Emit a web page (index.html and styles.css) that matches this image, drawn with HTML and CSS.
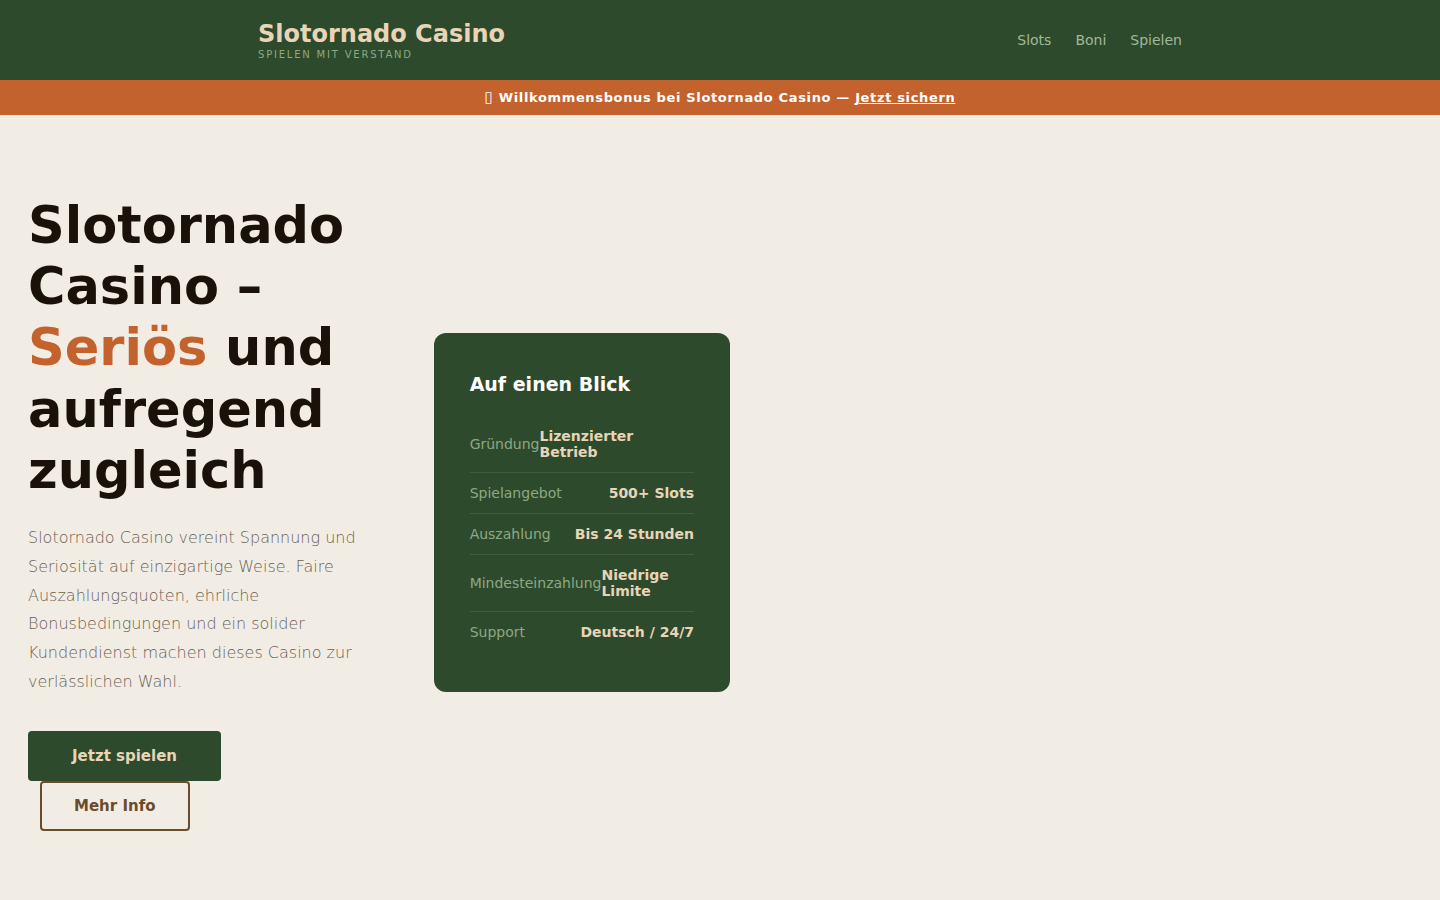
FILE: index.html
```html
<!DOCTYPE html>
<html lang="de">
<head>
    <meta charset="UTF-8">
    <meta name="viewport" content="width=device-width, initial-scale=1.0">
    <title>Slotornado Casino</title>
    <link rel="stylesheet" href="styles.css">
</head>
<body>
    <header class="site-header">
        <div class="header-inner">
            <div class="brand">
                <div class="logo">Slotornado Casino</div>
                <div class="tagline">Spielen mit Verstand</div>
            </div>
            <nav class="main-nav">
                <a href="#slots">Slots</a>
                <a href="#boni">Boni</a>
                <a href="#spielen">Spielen</a>
            </nav>
        </div>
    </header>

    <div class="promo-bar"><span class="promo-icon">&#9647;</span> Willkommensbonus bei Slotornado Casino — <a href="#bonus">Jetzt sichern</a></div>

    <section class="hero">
        <div class="hero-text">
            <h1>Slotornado Casino – <span class="accent">Seriös</span> und aufregend zugleich</h1>
            <p>Slotornado Casino vereint Spannung und Seriosität auf einzigartige Weise. Faire Auszahlungsquoten, ehrliche Bonusbedingungen und ein solider Kundendienst machen dieses Casino zur verlässlichen Wahl.</p>
            <a href="#spielen" class="btn btn-primary">Jetzt spielen</a>
            <a href="#info" class="btn btn-outline">Mehr Info</a>
        </div>
        <aside class="facts">
            <h3>Auf einen Blick</h3>
            <div class="fact"><span>Gründung</span><strong>Lizenzierter Betrieb</strong></div>
            <div class="fact"><span>Spielangebot</span><strong>500+ Slots</strong></div>
            <div class="fact"><span>Auszahlung</span><strong>Bis 24 Stunden</strong></div>
            <div class="fact"><span>Mindesteinzahlung</span><strong>Niedrige Limite</strong></div>
            <div class="fact"><span>Support</span><strong>Deutsch / 24/7</strong></div>
        </aside>
    </section>
</body>
</html>
```
FILE: styles.css
```css
* {
    margin: 0;
    padding: 0;
    box-sizing: border-box;
}

body {
    background: #f2ede4;
    color: #1a1208;
    font-family: 'DejaVu Sans', sans-serif;
}

/* Header */
.site-header {
    background: #2d4a2d;
}

.header-inner {
    display: flex;
    justify-content: space-between;
    align-items: center;
    max-width: 980px;
    min-height: 80px;
    margin: 0 auto;
    padding: 0 28px;
}

.logo {
    color: #e8d5b7;
    font-size: 24px;
    font-weight: 700;
    line-height: 28px;
}

.tagline {
    color: #8fa882;
    font-size: 10px;
    line-height: 13px;
    letter-spacing: 0.18em;
    text-transform: uppercase;
}

.main-nav {
    display: flex;
    gap: 24px;
}

.main-nav a {
    color: #a3b899;
    font-size: 14px;
    line-height: 16px;
    text-decoration: none;
}

/* Bonus bar */
.promo-bar {
    background: #c4622d;
    color: #fff;
    padding: 10px 20px;
    font-size: 13px;
    font-weight: 700;
    line-height: 15px;
    letter-spacing: 0.05em;
    text-align: center;
}

.promo-icon {
    font-size: 15px;
    font-weight: 400;
    line-height: 1;
}

.promo-bar a {
    color: #fff;
}

/* Hero */
.hero {
    display: grid;
    grid-template-columns: 6fr 5fr;
    gap: 50px;
    align-items: center;
    max-width: 758px;
    padding: 80px 28px;
}

.hero h1 {
    margin-bottom: 23px;
    font-size: 51px;
    line-height: 1.2;
}

.accent {
    color: #c4622d;
}

.hero p {
    margin-bottom: 34px;
    color: #6b6156;
    font-size: 16px;
    font-weight: 300;
    line-height: 1.8;
}

.btn {
    display: inline-block;
    border-radius: 4px;
    font-size: 15px;
    font-weight: 700;
    line-height: 18px;
    text-decoration: none;
    vertical-align: top;
}

.btn-primary {
    padding: 16px 44px;
    background: #2d4a2d;
    color: #e8d5b7;
}

.btn-outline {
    margin-left: 12px;
    padding: 14px 32px;
    border: 2px solid #6b4c2a;
    color: #6b4c2a;
}

/* Facts card */
.facts {
    padding: 40px 36px;
    background: #2d4a2d;
    border-radius: 12px;
}

.facts h3 {
    margin-bottom: 20px;
    color: #fff;
    font-size: 19px;
    line-height: 23px;
}

.fact {
    display: flex;
    justify-content: space-between;
    align-items: center;
    padding: 12px 0;
    border-bottom: 1px solid rgba(255, 255, 255, 0.1);
    font-size: 14px;
    line-height: 16px;
}

.fact:last-child {
    border-bottom: none;
}

.fact span {
    color: #8fa882;
}

.fact strong {
    color: #e8d5b7;
}

@media (max-width: 700px) {
    .hero {
        grid-template-columns: 1fr;
    }
}
```
